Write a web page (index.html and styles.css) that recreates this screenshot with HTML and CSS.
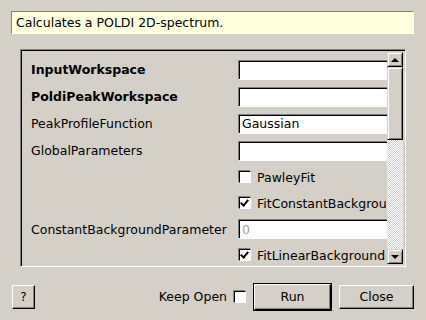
FILE: index.html
```html
<!DOCTYPE html>
<html lang="en">
<head>
<meta charset="UTF-8">
<title>PoldiCalculateSpectrum2D</title>
<link rel="stylesheet" href="styles.css">
</head>
<body>
    <div class="dialog">
        <div class="desc">Calculates a POLDI 2D-spectrum.</div>

        <div class="frame">
            <div class="props">
                <div class="label bold">InputWorkspace</div>
                <div class="field"><input class="edit" type="text"></div>

                <div class="label bold">PoldiPeakWorkspace</div>
                <div class="field"><input class="edit" type="text"></div>

                <div class="label">PeakProfileFunction</div>
                <div class="field"><input class="edit" type="text" value="Gaussian"></div>

                <div class="label">GlobalParameters</div>
                <div class="field"><input class="edit" type="text"></div>

                <div class="label"></div>
                <div class="field"><span class="check"></span><span class="check-text">PawleyFit</span></div>

                <div class="label"></div>
                <div class="field"><span class="check checked"></span><span class="check-text">FitConstantBackground</span></div>

                <div class="label">ConstantBackgroundParameter</div>
                <div class="field"><input class="edit" type="text" placeholder="0"></div>

                <div class="label"></div>
                <div class="field"><span class="check checked"></span><span class="check-text">FitLinearBackground</span></div>
            </div>
            <div class="scrollbar">
                <div class="sb-btn"><span class="arrow up"></span></div>
                <div class="sb-thumb"></div>
                <div class="sb-track"></div>
                <div class="sb-btn"><span class="arrow down"></span></div>
            </div>
        </div>

        <div class="buttons">
            <button class="btn help">?</button>
            <div class="spacer"></div>
            <span class="keep">Keep Open</span>
            <span class="check keep-box"></span>
            <button class="btn run">Run</button>
            <button class="btn close">Close</button>
        </div>
    </div>
</body>
</html>
```

FILE: styles.css
```css
body {
margin: 0;
padding: 0;
background-color: #d4d0c8;
font-family: "DejaVu Sans", sans-serif;
font-size: 12.5px;
color: #000;
}

.dialog {
width: 426px;
height: 320px;
display: flex;
flex-direction: column;
}

.desc {
margin: 11px 12px 0 11px;
height: 21px;
line-height: 21px;
padding-left: 4px;
background-color: #ffffdc;
border: 1px solid;
border-color: #808080 #ffffff #ffffff #808080;
}

/* property list */
.frame {
margin: 15px 0 0 20px;
width: 381px;
height: 212px;
display: flex;
border: 1px solid;
border-color: #808080 #ffffff #ffffff #808080;
box-shadow: inset 1px 1px 0 #000;
padding: 2px 2px 2px 1px;
}

.props {
flex: 1;
overflow: hidden;
display: grid;
grid-template-columns: 216px 200px;
grid-template-rows: 27px 27px 27px 27px 26px 26px 26px 26px;
padding-top: 4px;
}

.props .label {
padding-left: 9px;
display: flex;
align-items: center;
white-space: nowrap;
}

.bold {
font-weight: bold;
}

.field {
display: flex;
align-items: center;
white-space: nowrap;
}

.edit {
box-sizing: border-box;
width: 200px;
height: 20px;
margin: 0;
padding: 0 3px;
font-family: "DejaVu Sans", sans-serif;
font-size: 12.5px;
background: #fff;
border: 1px solid;
border-color: #808080 #ffffff #ffffff #808080;
box-shadow: inset 1px 1px 0 #000;
outline: none;
}

.edit::placeholder {
color: #a0a0a0;
}

.check {
box-sizing: border-box;
display: inline-block;
width: 12px;
height: 12px;
margin-left: 1px;
background: #fff;
border: 1px solid;
border-color: #000 #fff #fff #000;
box-shadow: -1px -1px 0 #808080;
position: relative;
}

.checked::after {
content: "";
position: absolute;
left: 2px;
top: 0px;
width: 3px;
height: 6px;
border: solid #000;
border-width: 0 2px 2px 0;
transform: rotate(40deg);
}

.check-text {
margin-left: 6px;
}

/* scrollbar */
.scrollbar {
width: 16px;
display: flex;
flex-direction: column;
}

.sb-btn, .sb-thumb {
box-sizing: border-box;
background: #d4d0c8;
border: 1px solid;
border-color: #d4d0c8 #000 #000 #d4d0c8;
box-shadow: inset 1px 1px 0 #fff, inset -1px -1px 0 #808080;
}

.sb-btn {
height: 15px;
display: flex;
align-items: center;
justify-content: center;
}

.sb-thumb {
height: 73px;
}

.sb-track {
flex: 1;
background: repeating-conic-gradient(#ffffff 0 25%, #d4d0c8 0 50%) 0 0 / 2px 2px;
}

.arrow {
width: 0;
height: 0;
border-left: 4px solid transparent;
border-right: 4px solid transparent;
}

.arrow.up {
border-bottom: 4px solid #000;
}

.arrow.down {
border-top: 4px solid #000;
}

/* bottom buttons */
.buttons {
display: flex;
align-items: center;
margin: 16px 12px 0 12px;
height: 27px;
}

.spacer {
flex: 1;
}

.btn {
box-sizing: border-box;
height: 24px;
font-family: "DejaVu Sans", sans-serif;
font-size: 12.5px;
color: #000;
background: #d4d0c8;
border: 1px solid;
border-color: #fff #000 #000 #fff;
box-shadow: inset -1px -1px 0 #808080;
padding: 0;
}

.help {
width: 23px;
font-size: 12px;
}

.keep {
margin-right: 6px;
}

.keep-box {
margin-right: 8px;
}

.run {
width: 77px;
height: 26px;
outline: 1px solid #000;
margin-right: 8px;
}

.close {
width: 75px;
}
```
